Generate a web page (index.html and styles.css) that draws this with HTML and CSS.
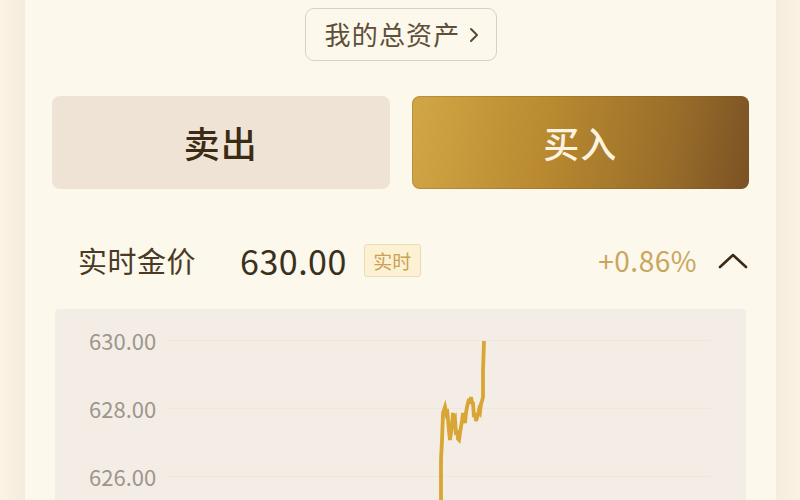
FILE: index.html
```html
<!DOCTYPE html>
<html lang="zh">
<head>
<meta charset="utf-8">
<link rel="stylesheet" href="styles.css">
</head>
<body>
<div class="page">
  <div class="side side-left"></div>
  <main class="main">
    <div class="asset-wrap">
      <button class="asset-btn">我的总资产<svg class="chev" viewBox="0 0 12 20" width="12" height="20"><path d="M3 4 L9 10 L3 16" fill="none" stroke="#5a4a32" stroke-width="2" stroke-linecap="round" stroke-linejoin="round"/></svg></button>
    </div>
    <div class="actions">
      <button class="act sell">卖出</button>
      <button class="act buy">买入</button>
    </div>
    <div class="price-row">
      <span class="price-label">实时金价</span>
      <span class="price-val">630.00</span>
      <span class="badge">实时</span>
      <span class="spacer"></span>
      <span class="pct">+0.86%</span>
      <svg class="caret" viewBox="0 0 32 20" width="32" height="20"><path d="M3 17 L16 5 L29 17" fill="none" stroke="#3a2c18" stroke-width="2.6" stroke-linecap="round" stroke-linejoin="round"/></svg>
    </div>
    <div class="chart">
      <div class="yrow"><span class="ylab">630.00</span><span class="grid"></span></div>
      <div class="yrow"><span class="ylab">628.00</span><span class="grid"></span></div>
      <div class="yrow"><span class="ylab">626.00</span><span class="grid"></span></div>
      <svg class="line" viewBox="0 0 691 191" width="691" height="191">
        <polyline fill="none" stroke="#d9a535" stroke-width="3.8" stroke-linejoin="miter" stroke-linecap="butt"
          points="386,200 386,150 387,132 388,104 389,101 390,98 391,103 392,100 393,110 394,122 395,131 396,124 397,118 398,104 399,112 400,110 401,126 402,121 403,130 404,131 405,124 406,118 407,112 408,104 409,110 410,114 411,104 412,98 413,94 414,90 415,95 416,88 417,93 418,94 419,108 420,104 421,112 422,109 423,106 424,101 425,103 426,95 427,92 428,88 428,62 429,32"/>
      </svg>
    </div>
  </main>
  <div class="side side-right"></div>
</div>
</body>
</html>
```
FILE: styles.css
```css
* { box-sizing: border-box; }
html, body { margin: 0; padding: 0; }
body {
  width: 800px;
  height: 500px;
  overflow: hidden;
  background: #fcf8ec;
  font-family: "Noto Sans CJK SC", "Noto Sans", sans-serif;
}
.page {
  display: flex;
  height: 500px;
}
.side {
  background: #f9efdf;
  flex: none;
}
.side-left { width: 25px; background: linear-gradient(90deg, #fbf3e4, #f5ebdc); }
.side-right { width: 24px; background: linear-gradient(90deg, #f6ecdc, #fbf2e4); }
.main {
  flex: 1;
  display: flex;
  flex-direction: column;
  background: #fcf8ec;
}
.asset-wrap {
  display: flex;
  justify-content: center;
  padding-top: 8px;
  padding-left: 1px;
}
.asset-btn {
  display: flex;
  align-items: center;
  gap: 7px;
  height: 53px;
  width: 192px;
  justify-content: center;
  border: 1.5px solid #d9d1bf;
  border-radius: 9px;
  background: #fcf8ec;
  color: #5e4f38;
  font-family: inherit;
  font-size: 26px;
  letter-spacing: 1.2px;
  padding: 0 0 2px 2px;
}
.chev { flex: none; margin-top: 2px; }
.actions {
  display: flex;
  gap: 22px;
  padding: 0 27px;
  margin-top: 35px;
}
.act {
  flex: 1;
  height: 93px;
  border: none;
  border-radius: 8px;
  font-family: inherit;
  font-size: 36px;
  font-weight: 500;
  letter-spacing: 1px;
  padding: 0 0 2px;
}
.sell {
  background: #efe3d5;
  color: #3b2a14;
}
.buy {
  background: linear-gradient(100deg, #d2a646 0%, #b98a30 40%, #9a6e2a 75%, #7a5224 100%);
  color: #fdf3e0;
  box-shadow: inset 0 0 0 1px rgba(120, 80, 30, 0.25);
}
.price-row {
  display: flex;
  align-items: center;
  height: 46px;
  margin-top: 48px;
  padding: 0 27px 0 53px;
}
.price-label {
  font-size: 29px;
  color: #4a3a24;
  letter-spacing: 0.5px;
}
.price-val {
  margin-left: 44px;
  font-size: 34px;
  color: #3a3020;
  letter-spacing: 0.5px;
}
.badge {
  margin-left: 17px;
  height: 33px;
  width: 57px;
  display: flex;
  align-items: center;
  justify-content: center;
  background: #fdf1d4;
  border: 1.5px solid #eadbb8;
  border-radius: 3px;
  color: #caa255;
  font-size: 19px;
}
.spacer { flex: 1; }
.pct {
  font-size: 28px;
  color: #c9a65c;
  letter-spacing: 0.5px;
}
.caret { margin-left: 20px; flex: none; }
.chart {
  position: relative;
  margin: 26px 30px 0;
  flex: 1;
  background: #f4ede6;
  border-radius: 4px 4px 0 0;
  padding-top: 18px;
  display: flex;
  flex-direction: column;
  gap: 42px;
}
.yrow {
  display: flex;
  align-items: center;
  height: 26px;
  padding-left: 34px;
}
.ylab {
  font-size: 22px;
  color: #9c968d;
  width: 78px;
}
.grid {
  flex: 1;
  height: 1px;
  margin-right: 36px;
  background: #efe6dc;
}
.line {
  position: absolute;
  left: 0;
  top: 0;
}
```
